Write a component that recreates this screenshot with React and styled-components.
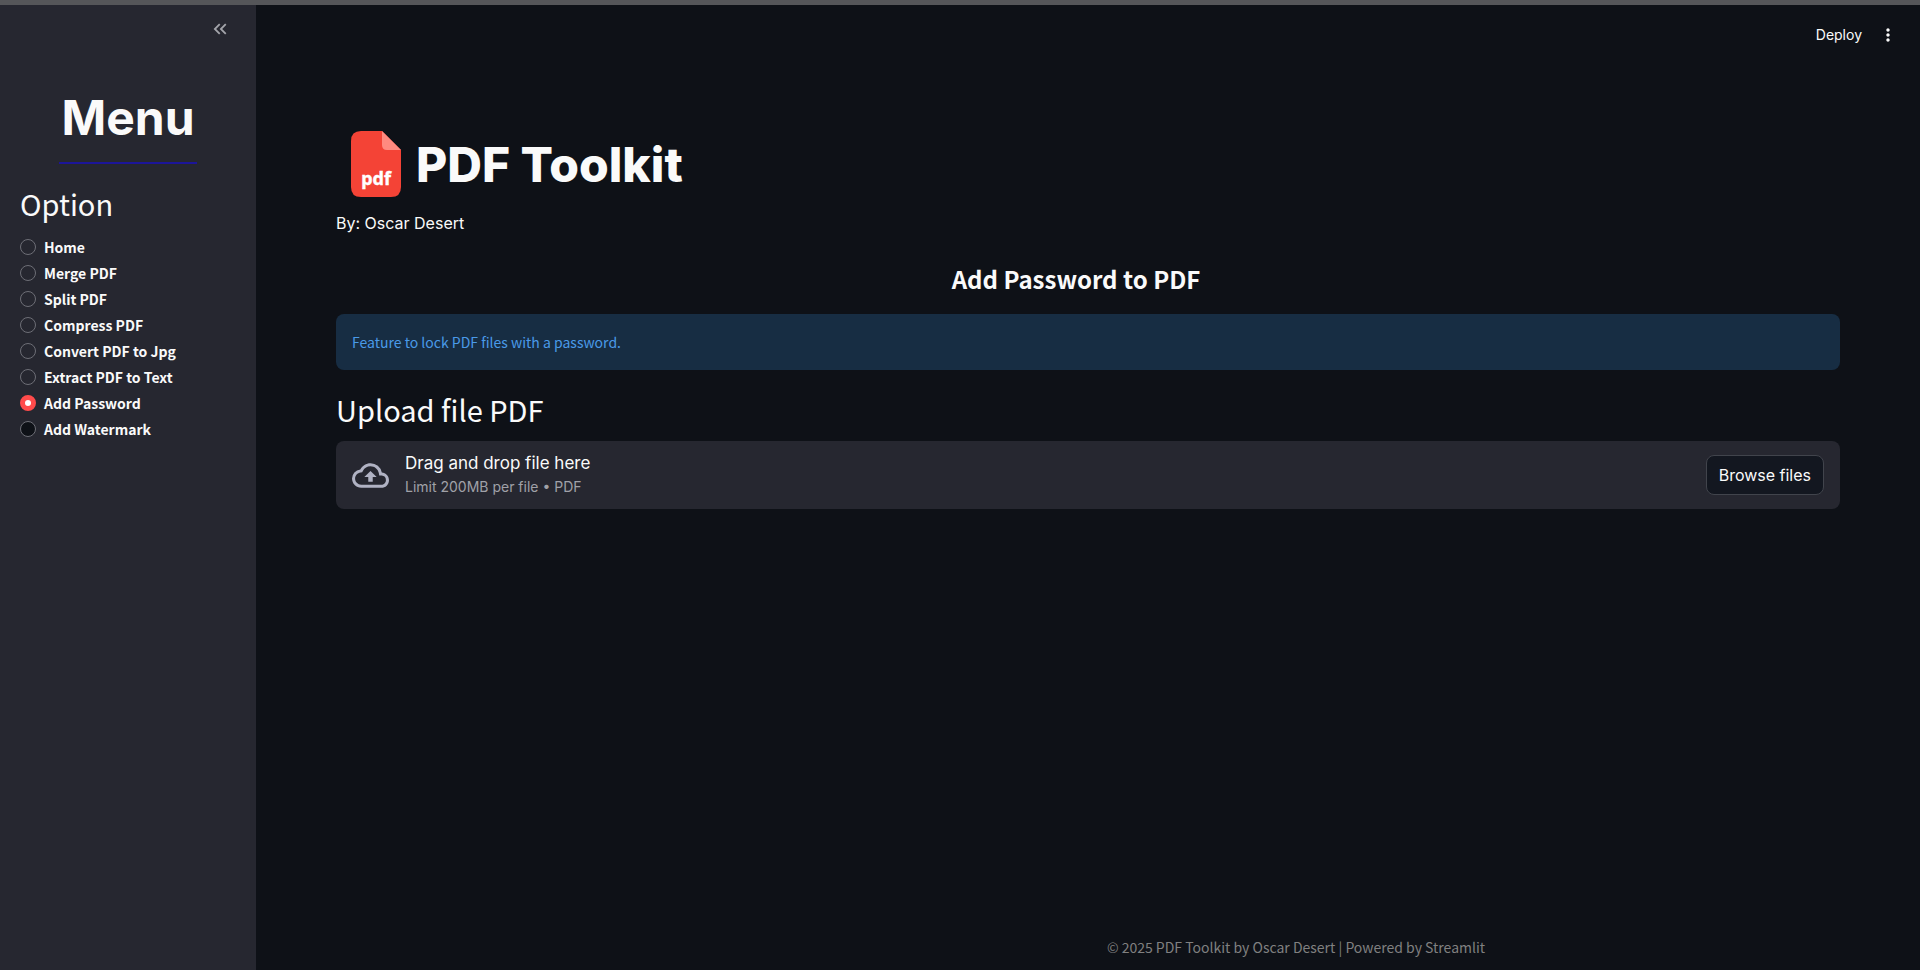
import React, {useState} from "react"
import styled, {createGlobalStyle} from "styled-components"
import {MdKeyboardDoubleArrowLeft, MdMoreVert, MdOutlineBackup} from "react-icons/md"

const options = [
	"Home",
	"Merge PDF",
	"Split PDF",
	"Compress PDF",
	"Convert PDF to Jpg",
	"Extract PDF to Text",
	"Add Password",
	"Add Watermark",
]

const PdfIcon = () => (
	<svg width="80" height="80" viewBox="0 1 80 80" aria-hidden="true">
		<path d="M25 7H46L65 26V63Q65 73 55 73H25Q15 73 15 63V17Q15 7 25 7Z" fill="#f44336" />
		<path d="M46 7L65 26H51Q46 26 46 21Z" fill="#ff8a80" />
		<text x="40" y="61" textAnchor="middle" fontFamily="'Noto Sans', sans-serif" fontWeight="700" fontSize="18" fill="#fff" stroke="#fff" strokeWidth="0.4">pdf</text>
	</svg>
)

const App = () => {
	const [selected, setSelected] = useState("Add Password")
	return (
	<>
		<GlobalStyle />
		<Page>
			<TopStrip />
			<Sidebar>
				<CollapseButton aria-label="Collapse sidebar"><MdKeyboardDoubleArrowLeft size={22} /></CollapseButton>
				<MenuTitle><span>Menu</span></MenuTitle>
				<OptionGroup>
					<legend>Option</legend>
					{
						options.map((name, index)=>(
							<OptionRow key={name}>
								<Radio
									name="option"
									value={name}
									checked={selected===name}
									$filled={index===options.length-1}
									onChange={()=>setSelected(name)} />
								{name}
							</OptionRow>
						))
					}
				</OptionGroup>
			</Sidebar>
			<Main>
				<Header>
					<HeaderButton>Deploy</HeaderButton>
					<HeaderButton aria-label="More options"><MdMoreVert size={20} /></HeaderButton>
				</Header>
				<Content>
					<Brand>
						<PdfIcon />
						<h1>PDF Toolkit</h1>
					</Brand>
					<Author>By: Oscar Desert</Author>
					<SectionTitle>Add Password to PDF</SectionTitle>
					<Info>Feature to lock PDF files with a password.</Info>
					<UploadLabel htmlFor="browse">Upload file PDF</UploadLabel>
					<Uploader>
						<MdOutlineBackup size={37} />
						<div className="instructions">
							<span>Drag and drop file here</span>
							<small>Limit 200MB per file • PDF</small>
						</div>
						<BrowseButton id="browse">Browse files</BrowseButton>
					</Uploader>
				</Content>
				<Footer>© 2025 PDF Toolkit by Oscar Desert | Powered by Streamlit</Footer>
			</Main>
		</Page>
	</>
	)
}
export default App

const sans = `"Noto Sans CJK SC", "Noto Sans", sans-serif`
const round = `Inter, "Open Sans", sans-serif`

const GlobalStyle = createGlobalStyle`
	*{
		box-sizing:border-box;
	}
	body{
		margin:0;
		background:#0e1117;
		color:#fafafa;
		font-family:${round};
		font-size:16px;
	}
	button{
		font-family:inherit;
		color:inherit;
		background:none;
		border:0;
		padding:0;
		cursor:pointer;
	}
	svg{
		display:block;
		flex-shrink:0;
	}
`

const Page = styled.div`
	min-height:100vh;
	display:grid;
	grid-template-columns:256px 1fr;
	grid-template-rows:5px 1fr;
`

const TopStrip = styled.div`
	grid-column:1 / -1;
	background:#555659;
`

const Sidebar = styled.aside`
	background:#262730;
	padding:13px 20px;
	display:flex;
	flex-direction:column;
`

const CollapseButton = styled.button`
	align-self:flex-end;
	margin-right:5px;
	color:#a3a4aa;
`

const MenuTitle = styled.h1`
	margin:44px 0 0;
	text-align:center;
	font-size:48px;
	font-weight:700;
	line-height:68px;
	span{
		display:inline-block;
		padding:0 2px 10px;
		border-bottom:2px solid #1c1599;
	}
`

const OptionGroup = styled.fieldset`
	border:0;
	margin:17px 0 0;
	padding:0;
	font-family:${sans};
	legend{
		padding:0;
		margin-bottom:9px;
		font-size:29px;
		line-height:44px;
	}
`

const OptionRow = styled.label`
	display:flex;
	align-items:center;
	gap:8px;
	font-size:14px;
	font-weight:700;
	line-height:26px;
	cursor:pointer;
`

const Radio = styled.input.attrs({type:"radio"})`
	appearance:none;
	width:16px;
	height:16px;
	margin:0;
	border:1px solid #6d6e76;
	border-radius:50%;
	background:${({$filled})=>$filled?'#0e1117':'transparent'};
	&:checked{
		border:5px solid #ff4b4b;
		background:#fff;
	}
`

const Main = styled.main`
	display:flex;
	flex-direction:column;
	min-width:0;
`

const Header = styled.header`
	height:60px;
	padding:0 22px;
	display:flex;
	align-items:center;
	justify-content:flex-end;
	gap:16px;
`

const HeaderButton = styled.button`
	font-size:14px;
	line-height:20px;
`

const Content = styled.div`
	flex:1;
	padding:60px 80px;
	display:flex;
	flex-direction:column;
`

const Brand = styled.div`
	display:flex;
	align-items:center;
	h1{
		margin:0;
		font-size:48px;
		font-weight:800;
		line-height:56px;
	}
`

const Author = styled.p`
	margin:6px 0 0;
	line-height:24px;
`

const SectionTitle = styled.h2`
	margin:26px 0 17px;
	padding-right:24px;
	text-align:center;
	font-family:${sans};
	font-size:24px;
	font-weight:700;
	line-height:36px;
`

const Info = styled.div`
	padding:16px;
	border-radius:8px;
	background:#172d43;
	color:#4a9ae8;
	font-family:${sans};
	font-size:14px;
	line-height:24px;
`

const UploadLabel = styled.label`
	margin:17px 0 10px;
	font-family:${sans};
	font-size:29px;
	line-height:44px;
`

const Uploader = styled.section`
	min-height:68px;
	padding:8px 16px;
	border-radius:8px;
	background:#262730;
	display:flex;
	align-items:center;
	gap:16px;
	svg{
		color:#b0b2c3;
	}
	.instructions{
		flex:1;
		display:flex;
		flex-direction:column;
	}
	span{
		font-size:17px;
		line-height:24px;
	}
	small{
		color:#a0a1a8;
		font-size:14px;
		line-height:24px;
	}
`

const BrowseButton = styled.button`
	height:40px;
	padding:0 12px;
	border:1px solid #41444c;
	border-radius:8px;
	background:#131720;
	font-size:16px;
`

const Footer = styled.footer`
	padding:0 0 11px 416px;
	text-align:center;
	color:#808080;
	font-family:${sans};
	font-size:14px;
	line-height:24px;
`
